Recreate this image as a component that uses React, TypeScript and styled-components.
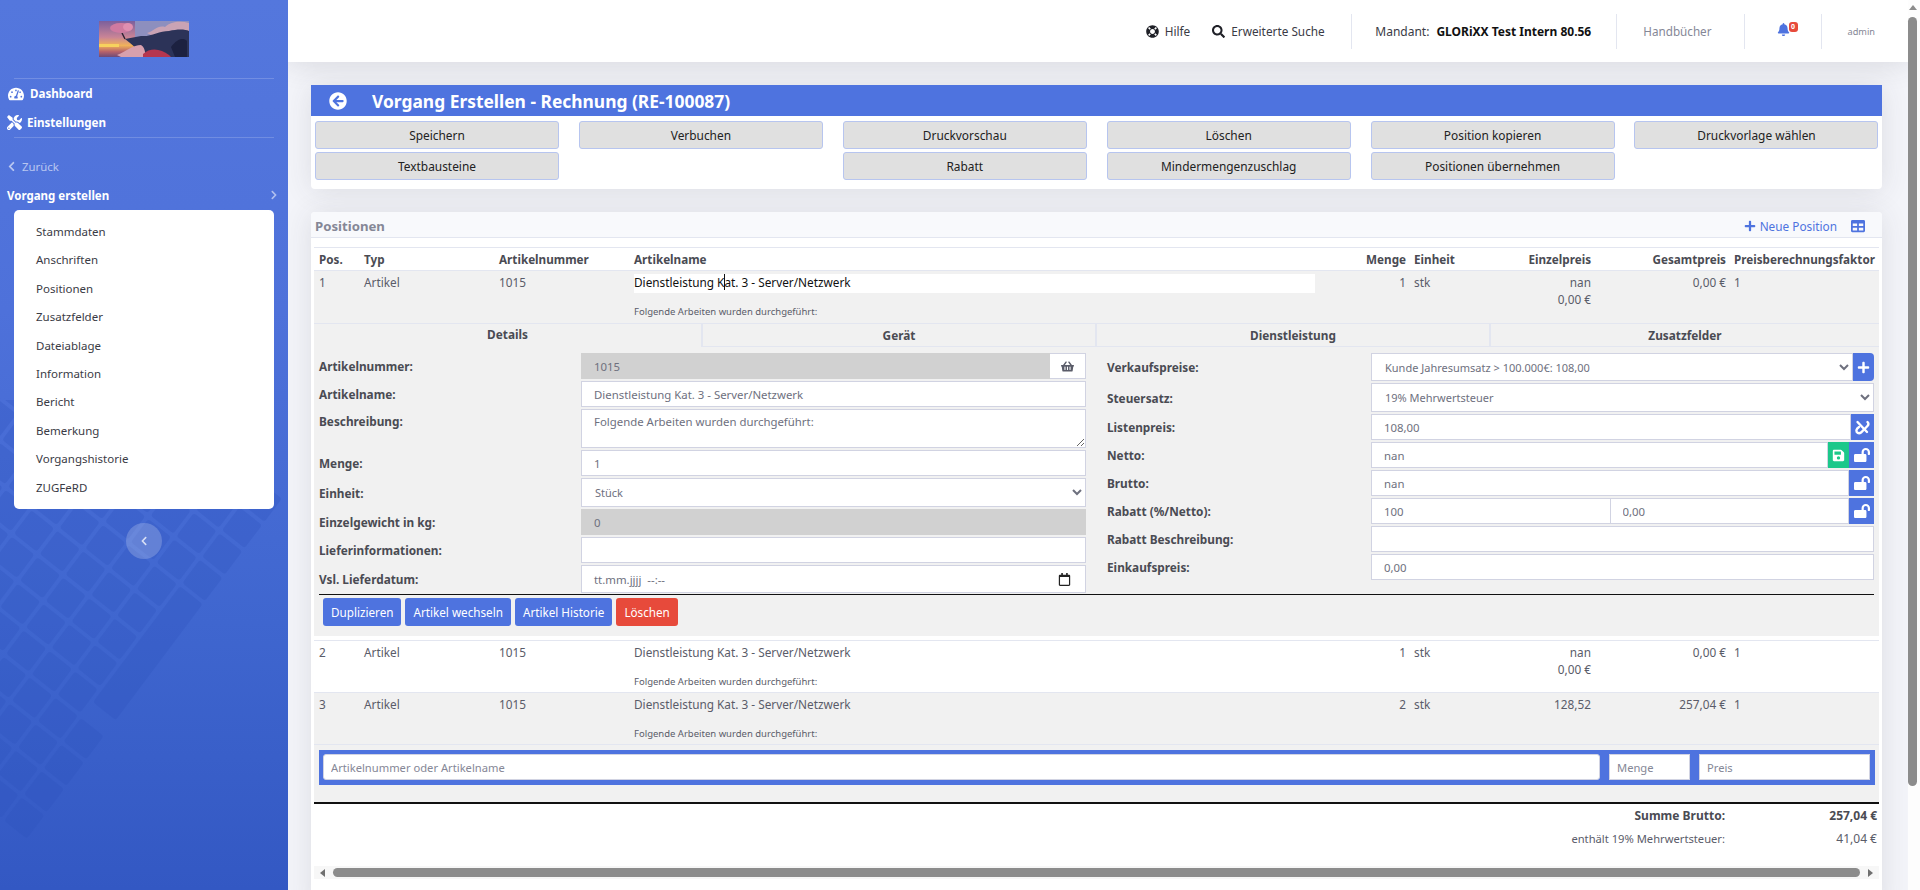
import * as React from 'react';
import styled, { createGlobalStyle } from 'styled-components';
import {
  FaTachometerAlt, FaTools, FaChevronLeft, FaChevronRight, FaLifeRing, FaSearch, FaBell,
  FaArrowCircleLeft, FaPlus, FaTable, FaShoppingBasket, FaSave, FaLockOpen, FaRegCalendar,
} from 'react-icons/fa';

const BLUE = '#4e73df';
const TEXT = '#5a5c69';
const LINE = '#e3e6f0';
const FIELD = '#d1d3e2';
const ROW = '#f1f1f1';

const GlobalStyle = createGlobalStyle`
  html, body {
    margin: 0;
    height: 100%;
    overflow: hidden;
    background: #f3f4f9;
    font-family: "Noto Sans", "Open Sans", sans-serif;
    font-size: 13px;
    color: ${TEXT};
  }
  * { box-sizing: border-box; }
`;

const subNav = ['Stammdaten', 'Anschriften', 'Positionen', 'Zusatzfelder', 'Dateiablage', 'Information', 'Bericht', 'Bemerkung', 'Vorgangshistorie', 'ZUGFeRD'];
const actions = ['Speichern', 'Verbuchen', 'Druckvorschau', 'Löschen', 'Position kopieren', 'Druckvorlage wählen', 'Textbausteine', '', 'Rabatt', 'Mindermengenzuschlag', 'Positionen übernehmen', ''];

const Logo = () => (
  <svg width="90" height="36" viewBox="0 0 90 36" preserveAspectRatio="none">
    <defs>
      <linearGradient id="sky" x1="0" y1="0" x2="0" y2="1">
        <stop offset="0" stopColor="#7b5f9c" />
        <stop offset="0.45" stopColor="#c98496" />
        <stop offset="0.68" stopColor="#f0b25a" />
        <stop offset="0.85" stopColor="#b8636a" />
        <stop offset="1" stopColor="#6d4a78" />
      </linearGradient>
    </defs>
    <rect width="90" height="36" fill="url(#sky)" />
    <rect x="36" width="54" height="16" fill="#8d8fbe" />
    <path d="M48 12 C56 10 58 4 66 6 C72 0 82 0 90 2 V18 L60 18Z" fill="#c9a3b4" />
    <path d="M26 18 L42 15 C52 16 60 10 70 10 C78 8 86 8 90 10 V36 H46 C40 30 34 24 26 18Z" fill="#2c3358" />
    <path d="M18 34 C28 30 34 24 42 24 C48 28 44 34 50 36 H22Z" fill="#d8a0ad" />
    <path d="M44 33 C52 26 62 28 70 34 L72 36 H44Z" fill="#b5364f" />
    <path d="M72 26 C78 18 84 16 88 20 V36 H76Z" fill="#1c2140" />
    <path d="M26 18 L23 12" stroke="#2b2030" strokeWidth="1.4" />
    <ellipse cx="22" cy="7" rx="11" ry="5" fill="#cf7aa0" />
    <ellipse cx="29" cy="6" rx="5" ry="4" fill="#e08fb0" />
    <rect x="0" y="23" width="20" height="3" fill="#f7d25e" />
  </svg>
);

const UnlinkIcon = () => (
  <svg width="17" height="17" viewBox="0 0 17 17" fill="none" stroke="#fff" strokeWidth="2.4" strokeLinecap="round">
    <path d="M3.5 3 L13 13" />
    <path d="M13.5 3 C15 4.5 14.5 6 13 7.5 L7 13.5 C5 15 2 14 2.5 11 C2.7 10 3.5 9 5 8" />
  </svg>
);

const keys: [number, number][] = [];
for (let r = 0; r < 9; r++) {
  for (let c = -1; c < 12; c++) {
    // the space bar sits in the first row, drawn as one long key below
    if (!(r === 0 && c >= 3 && c <= 7)) keys.push([r, c]);
  }
}

const Keyboard = () => (
  <KeyboardArt viewBox="0 0 288 490" width="288" height="490">
    <g fill="#2b50bb" opacity="0.24" transform="matrix(-0.78 -0.62 -0.6 0.8 262 125)">
      {keys.map(([r, c]) => (
        <rect key={`${r}-${c}`} x={r * 33} y={c * 33} width="29" height="29" rx="3" />
      ))}
      <rect x="0" y="99" width="29" height="145" rx="3" />
    </g>
  </KeyboardArt>
);

export default function App() {
  return (
    <Layout>
      <GlobalStyle />
      <Sidebar>
        <Keyboard />
        <Brand><Logo /></Brand>
        <Divider />
        <TopLink $top={6}><FaTachometerAlt size={16} />Dashboard</TopLink>
        <TopLink $top={12} $tight><FaTools size={15} />Einstellungen</TopLink>
        <Divider $top={6} />
        <BackLink><FaChevronLeft size={11} />Zurück</BackLink>
        <GroupTitle>Vorgang erstellen<FaChevronRight size={10} /></GroupTitle>
        <SubCard>
          {subNav.map((item) => <SubItem key={item}>{item}</SubItem>)}
        </SubCard>
        <Collapse><FaChevronLeft size={10} /></Collapse>
      </Sidebar>

      <Main>
        <Topbar>
          <TopAction><FaLifeRing size={13} />Hilfe</TopAction>
          <TopAction $ml={22}><FaSearch size={13} />Erweiterte Suche</TopAction>
          <TopDivider $ml={26} />
          <Tenant>Mandant:<strong>GLORiXX Test Intern 80.56</strong></Tenant>
          <TopDivider $ml={25} />
          <Manuals>Handbücher</Manuals>
          <TopDivider $ml={32} />
          <Bell><FaBell size={13} /><Badge>0</Badge></Bell>
          <TopDivider $ml={31} />
          <User>admin</User>
        </Topbar>

        <Content>
          <Card>
            <TitleBar><FaArrowCircleLeft size={18} /><h1>Vorgang Erstellen - Rechnung (RE-100087)</h1></TitleBar>
            <ActionGrid>
              {actions.map((a, i) => (a ? <GreyButton key={i}>{a}</GreyButton> : <span key={i} />))}
            </ActionGrid>
          </Card>

          <PositionsCard>
            <CardHeader>
              <span>Positionen</span>
              <HeaderTools>
                <NewPosition><FaPlus size={12} />Neue Position</NewPosition>
                <FaTable size={14} />
              </HeaderTools>
            </CardHeader>

            <Table>
              <HeadRow>
                <span>Pos.</span><span>Typ</span><span>Artikelnummer</span><span>Artikelname</span>
                <Right>Menge</Right><Unit>Einheit</Unit><Right>Einzelpreis</Right><Right>Gesamtpreis</Right><Unit>Preisberechnungsfaktor</Unit>
              </HeadRow>

              <Row $shaded>
                <span>1</span><span>Artikel</span><span>1015</span>
                <span>
                  <NameEdit>Dienstleistung K<Caret />at. 3 - Server/Netzwerk</NameEdit>
                  <Small $mt={12}>Folgende Arbeiten wurden durchgeführt:</Small>
                </span>
                <Right>1</Right><Unit>stk</Unit><Right>nan<br />0,00 €</Right><Right>0,00 €</Right><Unit>1</Unit>
              </Row>

              <Detail>
                <Tabs>
                  <Tab $active>Details</Tab><Tab>Gerät</Tab><Tab>Dienstleistung</Tab><Tab>Zusatzfelder</Tab>
                </Tabs>
                <Forms>
                  <FormCol $label={262}>
                    <FieldRow><Label>Artikelnummer:</Label>
                      <Group><Input $muted readOnly value="1015" /><BasketAddon><FaShoppingBasket size={13} /></BasketAddon></Group>
                    </FieldRow>
                    <FieldRow><Label>Artikelname:</Label><Input readOnly value="Dienstleistung Kat. 3 - Server/Netzwerk" /></FieldRow>
                    <FieldRow><Label $top>Beschreibung:</Label><TextArea readOnly value="Folgende Arbeiten wurden durchgeführt:" /></FieldRow>
                    <FieldRow><Label>Menge:</Label><Input readOnly value="1" /></FieldRow>
                    <FieldRow $h={29}><Label>Einheit:</Label><Select defaultValue="Stück"><option>Stück</option></Select></FieldRow>
                    <FieldRow><Label>Einzelgewicht in kg:</Label><Input $muted readOnly value="0" /></FieldRow>
                    <FieldRow><Label>Lieferinformationen:</Label><Input readOnly value="" /></FieldRow>
                    <FieldRow $h={28}><Label>Vsl. Lieferdatum:</Label>
                      <DateField>tt.mm.jjjj&nbsp;&nbsp;--:--<FaRegCalendar size={13} /></DateField>
                    </FieldRow>
                  </FormCol>
                  <FormCol $label={264}>
                    <FieldRow $h={28}><Label>Verkaufspreise:</Label>
                      <Group><Select defaultValue="a"><option value="a">Kunde Jahresumsatz &gt; 100.000€: 108,00</option></Select><Addon $w={21} $round><FaPlus size={13} /></Addon></Group>
                    </FieldRow>
                    <FieldRow $h={29}><Label>Steuersatz:</Label><Select defaultValue="a"><option value="a">19% Mehrwertsteuer</option></Select></FieldRow>
                    <FieldRow><Label>Listenpreis:</Label><Group><Input readOnly value="108,00" /><Addon $w={23}><UnlinkIcon /></Addon></Group></FieldRow>
                    <FieldRow><Label>Netto:</Label><Group><Input readOnly value="nan" /><Addon $w={21} $green><FaSave size={13} /></Addon><Addon $w={25}><FaLockOpen size={16} /></Addon></Group></FieldRow>
                    <FieldRow><Label>Brutto:</Label><Group><Input readOnly value="nan" /><Addon $w={25}><FaLockOpen size={16} /></Addon></Group></FieldRow>
                    <FieldRow><Label>Rabatt (%/Netto):</Label><Group><Input readOnly value="100" /><Input $joined readOnly value="0,00" /><Addon $w={25}><FaLockOpen size={16} /></Addon></Group></FieldRow>
                    <FieldRow><Label>Rabatt Beschreibung:</Label><Input readOnly value="" /></FieldRow>
                    <FieldRow><Label>Einkaufspreis:</Label><Input readOnly value="0,00" /></FieldRow>
                  </FormCol>
                </Forms>
                <BlackRule />
                <DetailActions>
                  <ActionButton>Duplizieren</ActionButton>
                  <ActionButton>Artikel wechseln</ActionButton>
                  <ActionButton>Artikel Historie</ActionButton>
                  <ActionButton $danger>Löschen</ActionButton>
                </DetailActions>
              </Detail>

              <Row $ruled $gap={4}>
                <span>2</span><span>Artikel</span><span>1015</span>
                <span>Dienstleistung Kat. 3 - Server/Netzwerk<Small $mt={14}>Folgende Arbeiten wurden durchgeführt:</Small></span>
                <Right>1</Right><Unit>stk</Unit><Right>nan<br />0,00 €</Right><Right>0,00 €</Right><Unit>1</Unit>
              </Row>
              <Row $shaded $ruled>
                <span>3</span><span>Artikel</span><span>1015</span>
                <span>Dienstleistung Kat. 3 - Server/Netzwerk<Small $mt={14}>Folgende Arbeiten wurden durchgeführt:</Small></span>
                <Right>2</Right><Unit>stk</Unit><Right>128,52</Right><Right>257,04 €</Right><Unit>1</Unit>
              </Row>

              <AddArea>
                <AddBar>
                  <AddInput $round placeholder="Artikelnummer oder Artikelname" />
                  <AddInput $w={81} placeholder="Menge" />
                  <AddInput $w={171} placeholder="Preis" />
                </AddBar>
              </AddArea>

              <Totals>
                <TotalLine $bold><span>Summe Brutto:</span><span>257,04 €</span></TotalLine>
                <TotalLine><Fine>enthält 19% Mehrwertsteuer:</Fine><span>41,04 €</span></TotalLine>
              </Totals>

              <HScroll>
                <ArrowLeft /><HThumb /><ArrowRight />
              </HScroll>
            </Table>
          </PositionsCard>
        </Content>
      </Main>

      <VScroll><ArrowUp /><VThumb /></VScroll>
    </Layout>
  );
}

const Layout = styled.div`
  display: flex;
  height: 890px;
  overflow: hidden;
`;

const Sidebar = styled.aside`
  position: relative;
  flex: 0 0 288px;
  height: 890px;
  overflow: hidden;
  padding-top: 21px;
  color: #fff;
  background: linear-gradient(180deg, #5477dd 0%, #4e71da 35%, #3f66cf 70%, #3358c3 100%);
  & > *:not(svg) {
    position: relative;
  }
`;

const KeyboardArt = styled.svg`
  position: absolute;
  left: 0;
  top: 400px;
`;

const Brand = styled.div`
  display: flex;
  justify-content: center;
  height: 36px;
`;

const Divider = styled.div<{ $top?: number }>`
  height: 1px;
  margin: ${(p) => p.$top ?? 21}px 14px 0;
  background: rgba(255, 255, 255, 0.18);
`;

const TopLink = styled.div<{ $top: number; $tight?: boolean }>`
  display: flex;
  align-items: center;
  gap: ${(p) => (p.$tight ? 5 : 6)}px;
  margin-top: ${(p) => p.$top}px;
  padding-left: ${(p) => (p.$tight ? 7 : 8)}px;
  height: 17px;
  font-size: 11.6px;
  font-weight: 700;
`;

const BackLink = styled.div`
  display: flex;
  align-items: center;
  gap: 5px;
  margin-top: 19px;
  padding-left: 6px;
  height: 18px;
  font-size: 11.4px;
  color: rgba(255, 255, 255, 0.6);
`;

const GroupTitle = styled.div`
  display: flex;
  align-items: center;
  justify-content: space-between;
  margin-top: 11px;
  padding: 0 9px 0 7px;
  height: 18px;
  font-size: 11.5px;
  font-weight: 700;
  svg {
    color: rgba(255, 255, 255, 0.55);
  }
`;

const SubCard = styled.nav`
  margin: 6px 14px 0;
  padding: 8px 0 7px;
  height: 299px;
  background: #fff;
  border-radius: 5px;
`;

const SubItem = styled.div`
  height: 28.4px;
  padding-left: 22px;
  line-height: 28.4px;
  font-size: 11.5px;
  color: #3a3b45;
`;

const Collapse = styled.div`
  display: flex;
  align-items: center;
  justify-content: center;
  width: 36px;
  height: 36px;
  margin: 14px auto 0;
  border-radius: 50%;
  color: rgba(255, 255, 255, 0.75);
  background: rgba(255, 255, 255, 0.2);
`;

const Main = styled.main`
  flex: 1;
  min-width: 0;
  height: 890px;
  overflow: hidden;
`;

const Topbar = styled.header`
  display: flex;
  align-items: center;
  justify-content: flex-end;
  height: 62px;
  padding-right: 33px;
  background: #fff;
  color: #3a3b45;
  font-size: 12px;
  box-shadow: 0 2px 28px rgba(58, 59, 69, 0.15);
`;

const TopAction = styled.div<{ $ml?: number }>`
  display: flex;
  align-items: center;
  gap: 6px;
  margin-left: ${(p) => p.$ml ?? 0}px;
  font-size: 11.8px;
  svg {
    color: #1f2027;
  }
`;

const TopDivider = styled.div<{ $ml: number }>`
  width: 1px;
  height: 35px;
  margin-left: ${(p) => p.$ml}px;
  background: ${LINE};
`;

const Tenant = styled.div`
  margin-left: 23.5px;
  strong {
    margin-left: 7px;
    color: #111;
  }
`;

const Manuals = styled.div`
  margin-left: 26px;
  font-size: 11.7px;
  color: #858796;
`;

const Bell = styled.div`
  position: relative;
  display: flex;
  margin: -3px 0 0 32px;
  color: ${BLUE};
`;

const Badge = styled.span`
  position: absolute;
  left: 12px;
  top: -1px;
  width: 9px;
  height: 10px;
  border-radius: 3px;
  background: #e74a3b;
  color: #fff;
  font-size: 7px;
  font-weight: 700;
  line-height: 10px;
  text-align: center;
`;

const User = styled.div`
  margin-left: 26px;
  color: #858796;
  font-size: 9.2px;
`;

const Content = styled.div`
  padding: 23px 26px 0 23px;
`;

const Card = styled.section`
  height: 104px;
  background: #fff;
  border-radius: 4px;
  box-shadow: 0 2px 28px rgba(58, 59, 69, 0.12);
`;

const TitleBar = styled.div`
  display: flex;
  align-items: center;
  gap: 25px;
  height: 31px;
  padding-left: 18px;
  background: ${BLUE};
  color: #fff;
  h1 {
    margin: 0;
    font-size: 17.4px;
    font-weight: 700;
  }
`;

const ActionGrid = styled.div`
  display: grid;
  grid-template-columns: repeat(6, 244px);
  column-gap: 19.9px;
  row-gap: 3px;
  padding: 5px 4px 0;
`;

const GreyButton = styled.button`
  height: 28px;
  padding: 0;
  background: #e0e0e0;
  border: 1px solid #b7c5ef;
  border-radius: 3px;
  color: #222;
  font: inherit;
  font-size: 11.9px;
`;

const PositionsCard = styled.section`
  margin-top: 23px;
  height: 700px;
  background: #fff;
  border-radius: 4px;
  box-shadow: 0 2px 28px rgba(58, 59, 69, 0.12);
`;

const CardHeader = styled.div`
  display: flex;
  align-items: center;
  justify-content: space-between;
  height: 26px;
  padding: 2px 17px 0 4px;
  background: #f8f9fc;
  border-bottom: 1px solid ${LINE};
  border-radius: 4px 4px 0 0;
  color: #858796;
  font-weight: 700;
  font-size: 13.2px;
`;

const HeaderTools = styled.div`
  display: flex;
  align-items: center;
  gap: 14px;
  color: ${BLUE};
`;

const NewPosition = styled.div`
  display: flex;
  align-items: center;
  gap: 4px;
  font-size: 11.8px;
  font-weight: 400;
`;

const Table = styled.div`
  margin: 9px 3px 0;
`;

const columns = '45px 135px 135px 681px 91px 93px 92px 135px 1fr';

const HeadRow = styled.div`
  display: grid;
  grid-template-columns: ${columns};
  align-items: center;
  height: 24px;
  padding-left: 5px;
  border-top: 1px solid ${LINE};
  border-bottom: 1px solid ${LINE};
  font-weight: 700;
  font-size: 11.7px;
  color: #4a4b53;
`;

const Row = styled.div<{ $shaded?: boolean; $ruled?: boolean; $gap?: number }>`
  display: grid;
  grid-template-columns: ${columns};
  align-items: start;
  height: 52px;
  margin-top: ${(p) => p.$gap ?? 0}px;
  padding: 3px 0 0 5px;
  background: ${(p) => (p.$shaded ? ROW : '#fff')};
  border-top: ${(p) => (p.$ruled ? `1px solid ${LINE}` : 'none')};
  font-size: 11.8px;
  line-height: 17px;
`;

const Right = styled.span`
  text-align: right;
  white-space: nowrap;
`;

const Unit = styled.span`
  padding-left: 8px;
`;

const NameEdit = styled.div`
  position: relative;
  height: 19px;
  background: #fff;
  color: #111;
`;

const Caret = styled.span`
  display: inline-block;
  width: 1px;
  height: 16px;
  margin: 0 -1px -3px 0;
  background: #111;
`;

const Small = styled.div<{ $mt: number }>`
  margin-top: ${(p) => p.$mt}px;
  font-size: 9.5px;
  line-height: 13px;
`;

const Detail = styled.div`
  height: 313px;
  background: ${ROW};
`;

const Tabs = styled.div`
  display: grid;
  grid-template-columns: 387px 394px 394px 390px;
  height: 24px;
  border-top: 1px solid ${LINE};
`;

const Tab = styled.div<{ $active?: boolean }>`
  display: flex;
  align-items: center;
  justify-content: center;
  border-left: ${(p) => (p.$active ? 'none' : `2px solid ${LINE}`)};
  border-bottom: ${(p) => (p.$active ? 'none' : `1px solid ${LINE}`)};
  padding-bottom: ${(p) => (p.$active ? 3 : 0)}px;
  font-weight: 700;
  font-size: 11.8px;
  color: #4a4b53;
`;

const Forms = styled.div`
  display: grid;
  grid-template-columns: 767px 767px;
  column-gap: 21px;
  margin-top: 6px;
  padding-left: 5px;
`;

const FormCol = styled.div<{ $label: number }>`
  --label: ${(p) => p.$label}px;
  display: flex;
  flex-direction: column;
  gap: 2px;
`;

const FieldRow = styled.div<{ $h?: number }>`
  display: grid;
  grid-template-columns: var(--label) 1fr;
  height: ${(p) => (p.$h ? `${p.$h}px` : 'auto')};
  min-height: 26px;
`;

const Label = styled.label<{ $top?: boolean }>`
  display: flex;
  align-items: ${(p) => (p.$top ? 'flex-start' : 'center')};
  padding-top: ${(p) => (p.$top ? 4 : 0)}px;
  font-weight: 700;
  font-size: 11.8px;
  color: #4a4b53;
`;

const fieldBase = `
  width: 100%;
  min-width: 0;
  height: 100%;
  border: 1px solid ${FIELD};
  border-radius: 0;
  background: #fff;
  color: #6e707e;
  font: inherit;
  font-size: 11.4px;
  outline: none;
`;

const Input = styled.input<{ $muted?: boolean; $joined?: boolean }>`
  ${fieldBase}
  flex: 1;
  padding: 0 12px;
  background: ${(p) => (p.$muted ? '#d1d1d1' : '#fff')};
  border-color: ${(p) => (p.$muted ? '#d1d1d1' : FIELD)};
  border-left-width: ${(p) => (p.$joined ? 0 : 1)}px;
`;

const TextArea = styled.textarea`
  ${fieldBase}
  display: block;
  height: 39px;
  padding: 4px 12px;
`;

const Select = styled.select`
  ${fieldBase}
  flex: 1;
  padding: 0 7px 0 9px;
  font-size: 11px;
`;

const Group = styled.div`
  display: flex;
  min-width: 0;
  height: 100%;
`;

const BasketAddon = styled.div`
  display: flex;
  align-items: center;
  justify-content: center;
  flex: 0 0 36px;
  background: #fff;
  border: 1px solid ${FIELD};
  border-left: none;
  color: #5a5c69;
`;

const Addon = styled.div<{ $w: number; $green?: boolean; $round?: boolean }>`
  display: flex;
  align-items: center;
  justify-content: center;
  flex: 0 0 ${(p) => p.$w}px;
  background: ${(p) => (p.$green ? '#1cc88a' : BLUE)};
  border-radius: ${(p) => (p.$round ? '0 4px 4px 0' : '0')};
  color: #fff;
`;

const DateField = styled.div`
  display: flex;
  align-items: center;
  justify-content: space-between;
  padding: 0 14px 0 12px;
  background: #fff;
  border: 1px solid ${FIELD};
  color: #6e707e;
  font-size: 11.4px;
  svg {
    color: #222;
  }
`;

const BlackRule = styled.div`
  height: 1px;
  margin: 1px 5px 0;
  background: #111;
`;

const DetailActions = styled.div`
  display: flex;
  gap: 4px;
  margin-top: 3px;
  padding-left: 9px;
`;

const ActionButton = styled.button<{ $danger?: boolean }>`
  height: 28px;
  padding: 0 8px;
  border: none;
  border-radius: 3px;
  background: ${(p) => (p.$danger ? '#e74a3b' : BLUE)};
  color: #fff;
  font: inherit;
  font-size: 11.7px;
`;

const AddArea = styled.div`
  height: 60px;
  padding: 5px 4px 0 5px;
  background: ${ROW};
  border-top: 1px solid ${LINE};
  border-bottom: 2px solid #111;
`;

const AddBar = styled.div`
  display: flex;
  gap: 9px;
  height: 35px;
  padding: 4px 5px 5px 4px;
  background: ${BLUE};
`;

const AddInput = styled.input<{ $w?: number; $round?: boolean }>`
  flex: ${(p) => (p.$w ? `0 0 ${p.$w}px` : '1')};
  min-width: 0;
  padding: 0 7px;
  border: 1px solid ${FIELD};
  border-radius: ${(p) => (p.$round ? 3 : 0)}px;
  font: inherit;
  font-size: 11.2px;
  outline: none;
  &::placeholder {
    color: #858796;
  }
`;

const Totals = styled.div`
  display: flex;
  flex-direction: column;
  gap: 5px;
  padding-top: 3px;
`;

const TotalLine = styled.div<{ $bold?: boolean }>`
  display: grid;
  grid-template-columns: 1411px 152px;
  height: 18px;
  line-height: 18px;
  text-align: right;
  font-size: 12px;
  font-weight: ${(p) => (p.$bold ? 700 : 400)};
  color: ${(p) => (p.$bold ? '#4a4b53' : TEXT)};
`;

const Fine = styled.span`
  font-size: 11.2px;
`;

const HScroll = styled.div`
  display: flex;
  align-items: center;
  gap: 8px;
  height: 13px;
  margin-top: 18px;
  padding: 0 6px;
  background: #f7f7f7;
`;

const HThumb = styled.div`
  flex: 1;
  height: 9px;
  border-radius: 5px;
  background: #8c8c8c;
`;

const ArrowLeft = styled.span`
  border-style: solid;
  border-width: 4px 5px 4px 0;
  border-color: transparent #6f6f6f transparent transparent;
`;

const ArrowRight = styled.span`
  border-style: solid;
  border-width: 4px 0 4px 5px;
  border-color: transparent transparent transparent #6f6f6f;
`;

const VScroll = styled.div`
  flex: 0 0 12px;
  display: flex;
  flex-direction: column;
  align-items: flex-start;
  padding-top: 5px;
  background: #fdfdfd;
`;

const ArrowUp = styled.span`
  margin-left: 1px;
  border-style: solid;
  border-width: 0 4px 5px;
  border-color: transparent transparent #8c8c8c;
`;

const VThumb = styled.div`
  width: 9px;
  height: 769px;
  margin-top: 7px;
  border-radius: 5px;
  background: #8c8c8c;
`;
